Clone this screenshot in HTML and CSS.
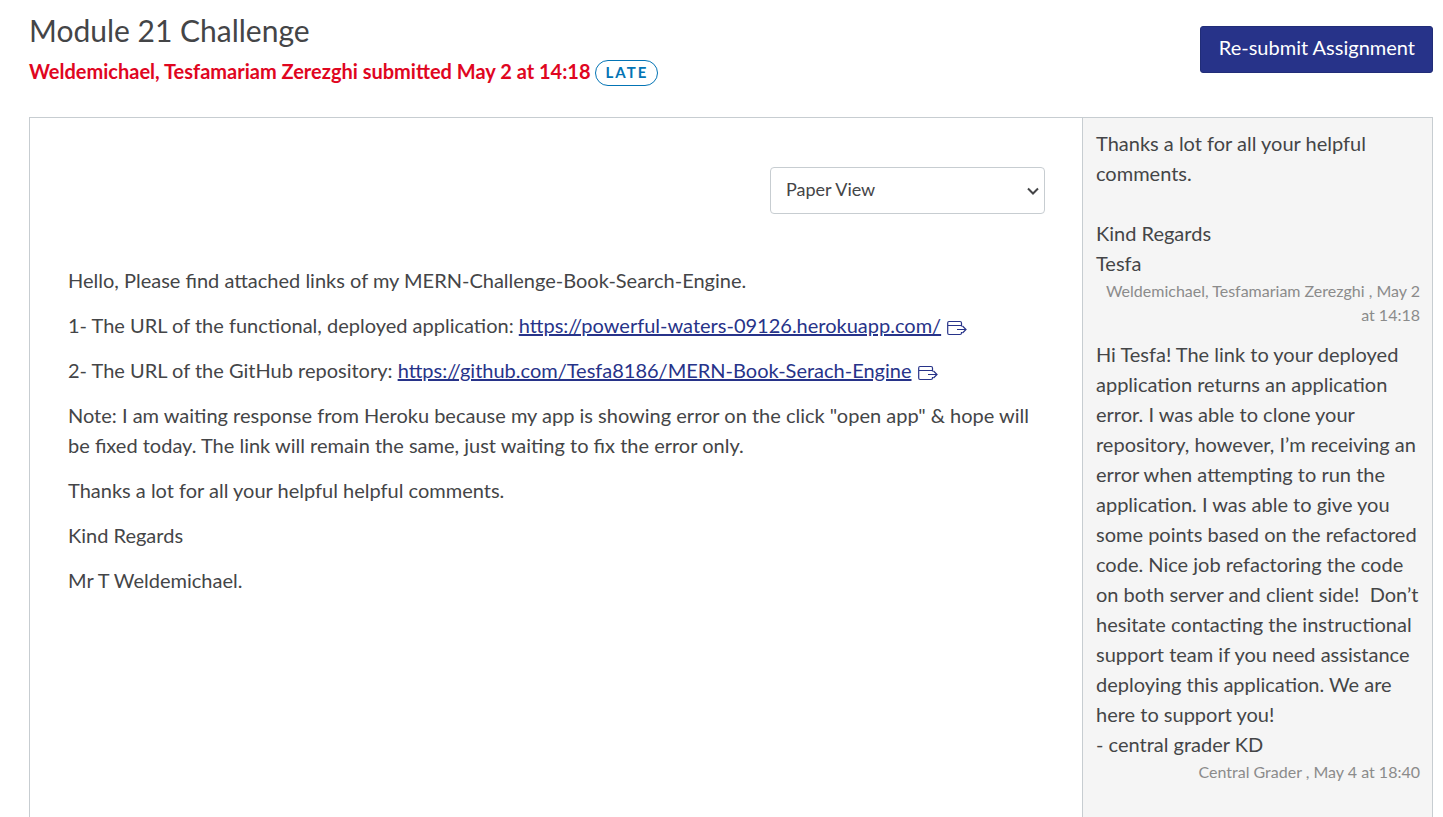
FILE: index.html
```html
<!DOCTYPE html>
<html lang="en">
<head>
<meta charset="utf-8">
<meta name="viewport" content="width=device-width, initial-scale=1">
<title>Module 21 Challenge</title>
<link rel="stylesheet" href="styles.css">
</head>
<body>
<div class="page">
  <header class="header">
    <div class="heading">
      <h1 class="title">Module 21 Challenge</h1>
      <div class="status"><span class="submitted">Weldemichael, Tesfamariam Zerezghi submitted May 2 at 14:18</span><span class="pill">LATE</span></div>
    </div>
    <button class="resubmit" type="button">Re-submit Assignment</button>
  </header>
  <div class="panels">
    <main class="submission">
      <div class="toolbar">
        <div class="view-field">
          <select class="view-select" aria-label="Submission view">
            <option>Paper View</option>
            <option>Plain Text View</option>
          </select>
          <svg class="chevron" viewBox="0 0 12 8" aria-hidden="true"><path d="M1 1.500L6 6.500L11 1.500"/></svg>
        </div>
      </div>
      <p>Hello, Please find attached links of my MERN-Challenge-Book-Search-Engine.</p>
      <p>1- The URL of the functional, deployed application: <a class="link" href="https://powerful-waters-09126.herokuapp.com/">https://powerful-waters-09126.herokuapp.com/</a><svg class="external" viewBox="0 0 20 16" aria-hidden="true"><path d="M14.500 6.500V3Q14.500 1.500 13 1.500H2Q.7 1.500 .7 3V13Q.7 14.500 2 14.500H13Q14.500 14.500 14.500 13V12M.7 5.500H14.500M10 9.500H19M15.500 6L19 9.500L15.500 13"/></svg></p>
      <p>2- The URL of the GitHub repository: <a class="link" href="https://github.com/Tesfa8186/MERN-Book-Serach-Engine">https://github.com/Tesfa8186/MERN-Book-Serach-Engine</a><svg class="external" viewBox="0 0 20 16" aria-hidden="true"><path d="M14.500 6.500V3Q14.500 1.500 13 1.500H2Q.7 1.500 .7 3V13Q.7 14.500 2 14.500H13Q14.500 14.500 14.500 13V12M.7 5.500H14.500M10 9.500H19M15.500 6L19 9.500L15.500 13"/></svg></p>
      <p>Note: I am waiting response from Heroku because my app is showing error on the click "open app" &amp; hope will be fixed today. The link will remain the same, just waiting to fix the error only.</p>
      <p>Thanks a lot for all your helpful helpful comments.</p>
      <p>Kind Regards</p>
      <p>Mr T Weldemichael.</p>
    </main>
    <aside class="comments" aria-label="Comments">
      <article class="comment">
        <div>Thanks a lot for all your helpful comments.<br><br>Kind Regards<br>Tesfa</div>
        <div class="meta">Weldemichael, Tesfamariam Zerezghi , May 2 at 14:18</div>
      </article>
      <article class="comment">
        <div>Hi Tesfa! The link to your deployed application returns an application error. I was able to clone your repository, however, I’m receiving an error when attempting to run the application. I was able to give you some points based on the refactored code. Nice job refactoring the code on both server and client side!&nbsp; Don’t hesitate contacting the instructional support team if you need assistance deploying this application. We are here to support you!<br>- central grader KD</div>
        <div class="meta">Central Grader , May 4 at 18:40</div>
      </article>
    </aside>
  </div>
</div>
</body>
</html>
```
FILE: styles.css
```css
* {
  box-sizing: border-box;
}

body {
  margin: 0;
  background: #fff;
  color: #444547;
  font: 20px/30px Lato, sans-serif;
}

.page {
  display: flex;
  flex-direction: column;
  min-height: 100vh;
  padding: 10px 10px 0 29px;
}

.header {
  display: flex;
  justify-content: space-between;
  align-items: flex-start;
  padding-bottom: 31px;
}

.title {
  margin: 0;
  font-size: 30px;
  line-height: 40px;
  font-weight: 400;
}

.status {
  display: flex;
  align-items: flex-start;
  gap: 4px;
  padding-top: 10px;
}

.submitted {
  color: #e0061f;
  font-weight: 700;
  line-height: 22px;
}

.pill {
  padding: 0 9px 2px 10px;
  border: 1px solid #0374b5;
  border-radius: 13px;
  color: #0374b5;
  font-size: 15px;
  font-weight: 700;
  line-height: 22px;
  letter-spacing: 2px;
}

.resubmit {
  margin-top: 16px;
  padding: 6px 17px 10px 18px;
  border: 1px solid #212d78;
  border-radius: 3px;
  background: #273389;
  color: #fff;
  font: 20px/29px Lato, sans-serif;
}

.panels {
  display: flex;
  flex: 1;
  border: 1px solid #c7cdd1;
  border-bottom: 0;
}

.submission {
  flex: 1;
  padding: 49px 37px 0 38px;
}

.toolbar {
  display: flex;
  justify-content: flex-end;
  margin-bottom: 51px;
}

.view-field {
  position: relative;
  width: 275px;
}

.view-select {
  display: block;
  appearance: none;
  width: 100%;
  height: 47px;
  padding: 0 36px 3px 15px;
  border: 1px solid #c7cdd1;
  border-radius: 4px;
  background: #fff;
  color: #444547;
  font: 18px Lato, sans-serif;
}

.chevron {
  position: absolute;
  top: 20px;
  right: 6px;
  width: 12px;
  height: 8px;
  fill: none;
  stroke: #444547;
  stroke-width: 2;
  pointer-events: none;
}

.submission p {
  margin: 0 0 15px;
}

.link {
  color: #273389;
  text-decoration: underline;
}

.external {
  width: 20px;
  height: 16px;
  margin-left: 6px;
  vertical-align: -3px;
  fill: none;
  stroke: #273389;
  stroke-width: 1.2;
}

.comments {
  width: 350px;
  padding: 10px 12px 0 13px;
  border-left: 1px solid #c7cdd1;
  background: #f5f5f5;
}

.comment {
  margin-bottom: 12px;
}

.meta {
  padding-top: 1px;
  color: #8b8b8b;
  font-size: 16px;
  line-height: 24px;
  text-align: right;
}
```
